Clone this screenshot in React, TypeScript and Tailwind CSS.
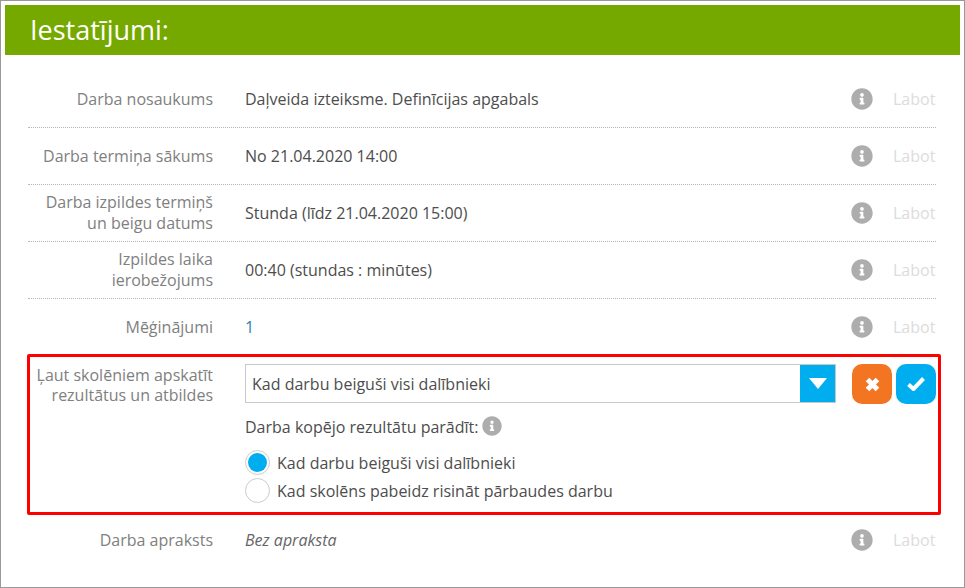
import React from 'react';
import { FaInfoCircle } from 'react-icons/fa';

const font = 'font-["Open_Sans",sans-serif]';

function Actions() {
  return (
    <div className="flex items-center w-[85px] ml-auto shrink-0">
      <FaInfoCircle className="w-[22px] h-[22px] shrink-0 text-[#adadad]" />
      <span className="ml-[20px] text-[#dcdcdc]">Labot</span>
    </div>
  );
}

function Row({ label, children, last }: { label: React.ReactNode; children: React.ReactNode; last?: boolean }) {
  return (
    <div className={`flex items-center ${last ? 'h-[56px]' : 'h-[57px] border-b border-dotted border-[#b5b5b5]'}`}>
      <div className="w-[185px] shrink-0 text-right text-[#808080] leading-[21px]">{label}</div>
      <div className="ml-[32px] text-[#4d4d4d]">{children}</div>
      <Actions />
    </div>
  );
}

function Radio({ checked, label }: { checked?: boolean; label: string }) {
  return (
    <div className="flex items-start h-[28px]">
      <span className="w-[25px] h-[25px] rounded-full border border-[#cccccc] flex items-center justify-center bg-white">
        {checked && <span className="w-[19px] h-[19px] rounded-full bg-[#00aeef]" />}
      </span>
      <span className="ml-[7px] pt-[1px] leading-[25px] text-[#4d4d4d]">{label}</span>
    </div>
  );
}

export default function App() {
  return (
    <div className={`w-[965px] h-[588px] overflow-hidden bg-white border border-[#999999] p-[4px] text-[16px] ${font}`}>
      <div className="h-[50px] bg-[#76a900] flex items-center pl-[25px] pt-[1px] text-[27px] text-white">Iestatījumi:</div>

      <div className="pt-[16px] pl-[23px] pr-[24px]">
        <Row label="Darba nosaukums">Daļveida izteiksme. Definīcijas apgabals</Row>
        <Row label="Darba termiņa sākums">No 21.04.2020 14:00</Row>
        <Row label={<>Darba izpildes termiņš<br />un beigu datums</>}>Stunda (līdz 21.04.2020 15:00)</Row>
        <Row label={<>Izpildes laika<br />ierobežojums</>}>00:40 (stundas : minūtes)</Row>
        <Row last label="Mēģinājumi"><span className="text-[#2b7fb8]">1</span></Row>

        <div className="flex h-[161px] -ml-[1px] -mr-[5px] mt-[-1px] border-[3px] border-[#ff0000] rounded-[2px] pt-[7px]">
          <div className="w-[183px] shrink-0 text-right text-[#808080] leading-[20px] pt-[1px]">
            Ļaut skolēniem apskatīt<br />rezultātus un atbildes
          </div>
          <div className="ml-[32px] w-[591px] shrink-0">
            <div className="flex h-[39px] border border-[#c8c8c8] bg-white">
              <div className="flex-1 flex items-center pl-[6px] text-[#4d4d4d]">Kad darbu beiguši visi dalībnieki</div>
              <div className="w-[35px] bg-[#00aeef] flex items-center justify-center">
                <svg width="18" height="11" viewBox="0 0 18 11"><path d="M0 0h18L9 11z" fill="#fff" /></svg>
              </div>
            </div>
            <div className="flex items-center mt-[14px] h-[20px] text-[#4d4d4d]">
              Darba kopējo rezultātu parādīt:
              <FaInfoCircle className="w-[20px] h-[20px] shrink-0 text-[#adadad] ml-[4px] mt-[-2px]" />
            </div>
            <div className="mt-[13px]">
              <Radio checked label="Kad darbu beiguši visi dalībnieki" />
              <Radio label="Kad skolēns pabeidz risināt pārbaudes darbu" />
            </div>
          </div>
          <div className="ml-[16px] flex gap-[4px]">
            <div className="w-[40px] h-[40px] rounded-[10px] bg-[#f47521] flex items-center justify-center">
              <svg width="15" height="15" viewBox="0 0 15 15">
                <path d="M2.5 2.5l10 10M12.5 2.5l-10 10" stroke="#fff" strokeWidth="5" fill="none" />
              </svg>
            </div>
            <div className="w-[40px] h-[40px] rounded-[10px] bg-[#00aeef] flex items-center justify-center">
              <svg width="18" height="14" viewBox="0 0 18 14">
                <path d="M1.5 7.5l5 4.5L16.5 1.5" stroke="#fff" strokeWidth="4" fill="none" />
              </svg>
            </div>
          </div>
        </div>

        <div className="mt-[-3px]">
          <Row last label="Darba apraksts"><span className="italic text-[#666666]">Bez apraksta</span></Row>
        </div>
      </div>
    </div>
  );
}
